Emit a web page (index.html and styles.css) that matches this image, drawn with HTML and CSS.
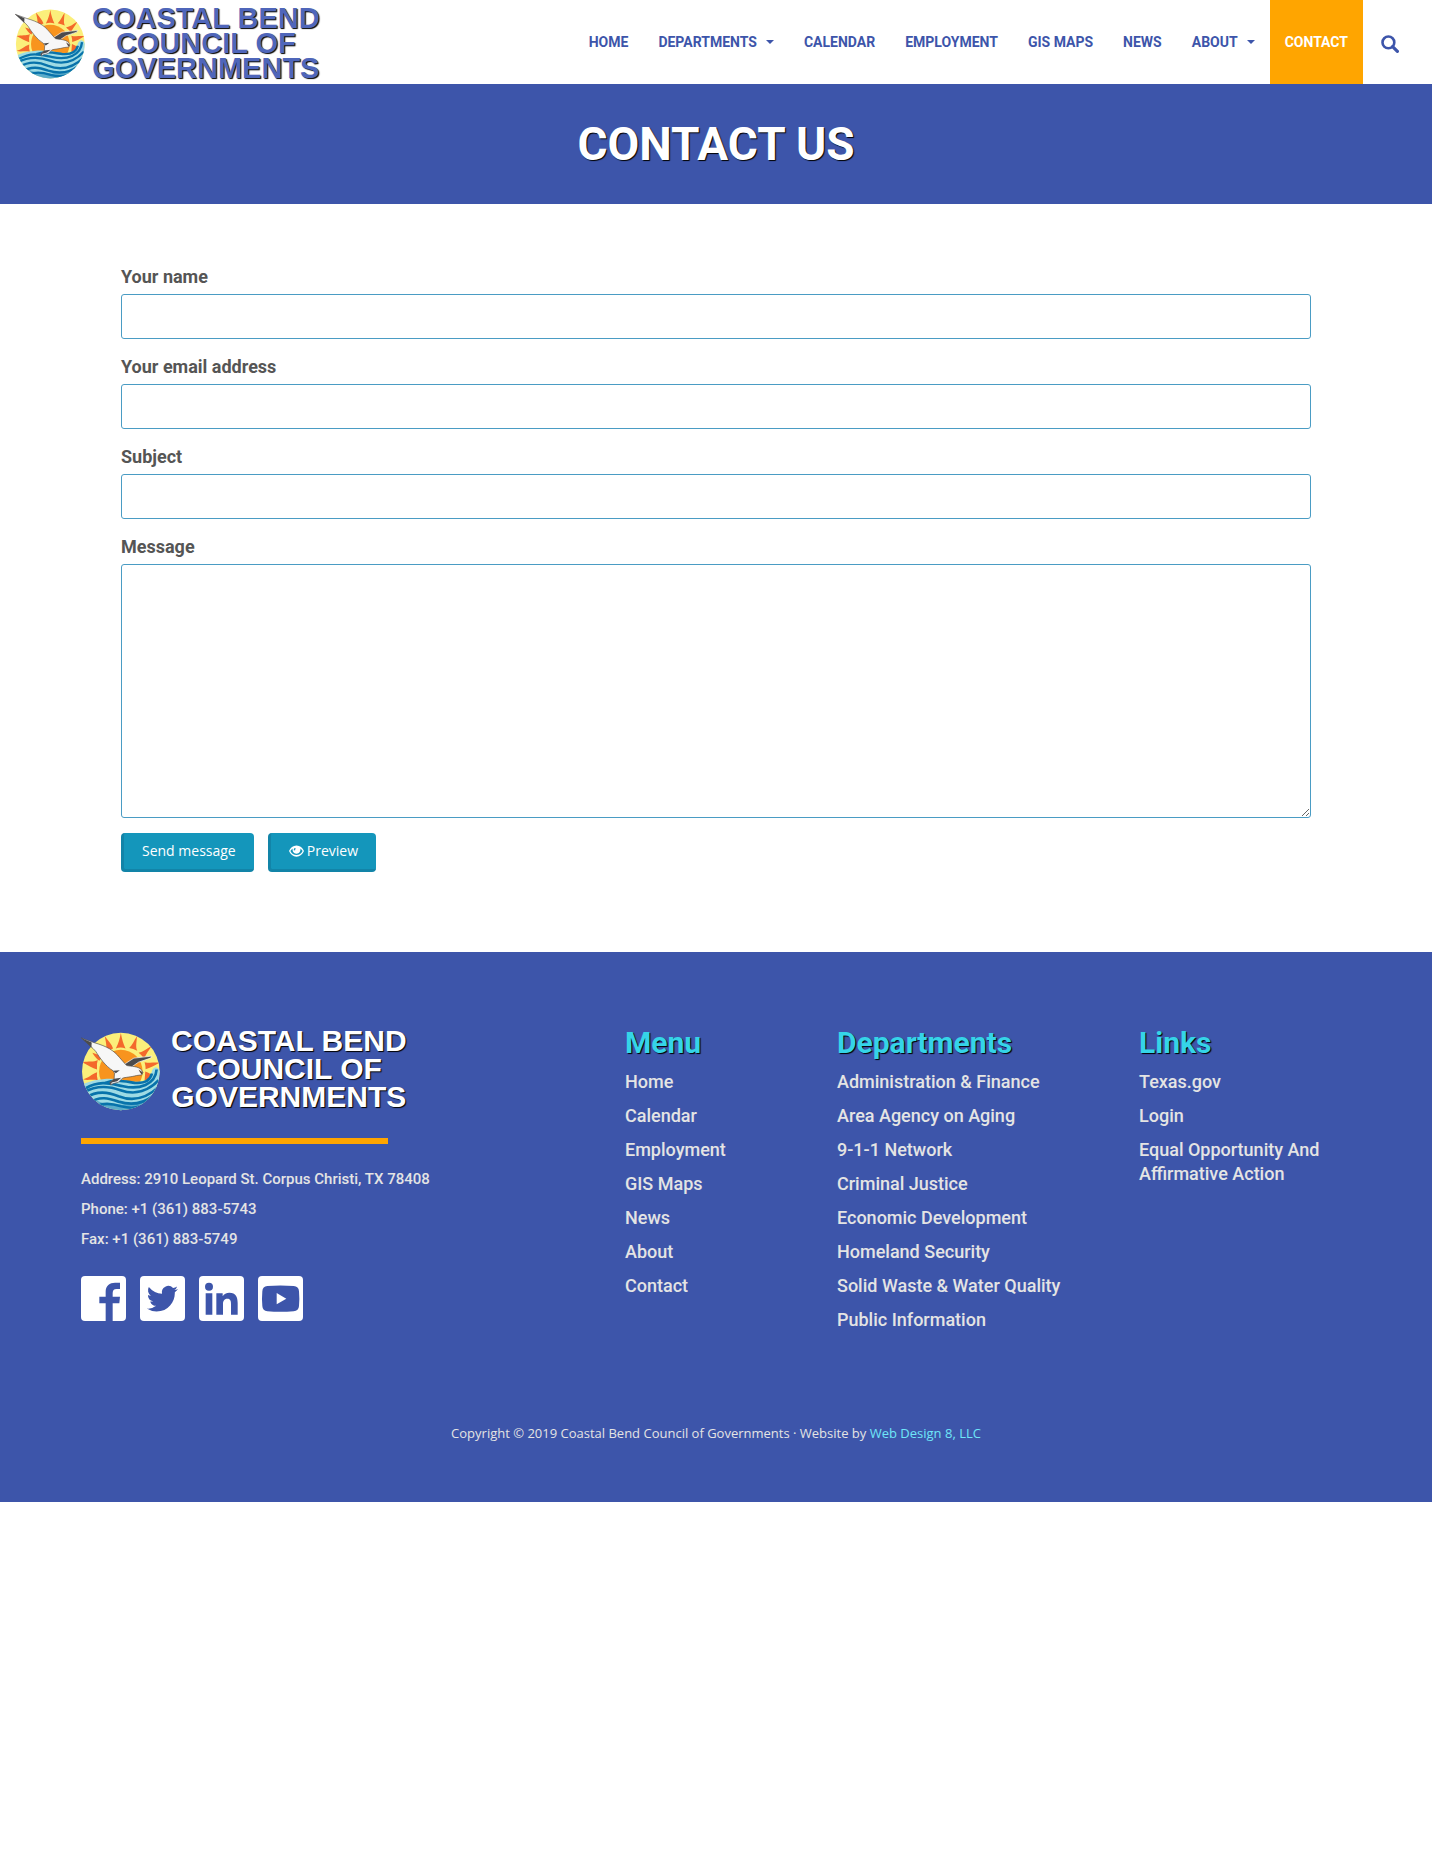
FILE: index.html
```html
<!DOCTYPE html>
<html lang="en">
<head>
<meta charset="utf-8">
<meta name="viewport" content="width=device-width, initial-scale=1">
<title>Contact Us | Coastal Bend Council of Governments</title>
<link rel="stylesheet" href="styles.css">
</head>
<body>
<svg class="defs" aria-hidden="true">
  <symbol id="emblem" viewBox="0 0 236 236">
    <clipPath id="disc"><circle cx="119" cy="118" r="116"/></clipPath>
    <g clip-path="url(#disc)">
      <rect width="236" height="236" fill="#fbef7b"/>
      <g fill="#f4692b">
        <path d="M104 49C112 34 116 20 119 3C122 20 126 34 133 49Q118 44 104 49Z"/>
        <path d="M74 59C79 43 73 27 71 12C80 25 92 36 96 49Q84 52 74 59Z"/>
        <path d="M144 48C154 40 158 26 167 13C167 28 162 44 168 56Q156 50 144 48Z"/>
        <path d="M172 62C186 60 197 50 211 42C203 56 193 66 189 80Q182 69 172 62Z"/>
        <path d="M190 90C204 94 218 90 234 92C221 100 206 108 193 111Q193 100 190 90Z"/>
        <path d="M50 84C38 92 22 86 5 91C20 98 34 108 48 112Q46 96 50 84Z"/>
        <path d="M48 120C32 126 20 138 6 141C18 146 32 140 50 144Q46 132 48 120Z"/>
        <path d="M45 66C55 68 60 76 60 78L55 86C46 80 40 72 34 62Z"/>
        <path d="M192 118C204 122 216 132 230 136L190 144Z"/>
      </g>
      <circle cx="119" cy="118" r="65" fill="#f8941e"/>
      <path d="M0 159C30 144 74 136 119 142C154 149 190 154 204 140C214 128 206 112 222 105C232 106 238 116 238 130V240H0Z" fill="#9edbe4"/>
      <g fill="none" stroke="#0873ab" stroke-width="8">
        <path d="M14 168C60 142 92 156 126 162C174 173 222 158 226 112"/>
        <path d="M8 180C50 158 84 162 118 174C164 190 204 174 232 144"/>
        <path d="M14 196C48 174 80 178 112 192C154 208 196 198 232 164"/>
        <path d="M26 212C54 190 84 198 112 208C150 220 186 214 216 190"/>
        <path d="M46 224C66 208 94 214 120 222C150 230 178 226 200 212"/>
        <path d="M72 152C102 140 132 148 160 152C186 154 206 148 212 124"/>
      </g>
      <path d="M20 186C60 230 150 222 218 196L190 236H50Z" fill="#0873ab" opacity=".45"/>
    </g>
    <path d="M130 96L158 78L212 72L208 78L172 90L146 108Z" fill="#4b4b4d" stroke="#fff" stroke-width="2"/>
    <path d="M1 18L40 32C78 43 98 55 115 76L136 100C150 103 170 102 180 112L185 121L182 128L166 130C148 135 132 135 124 138L112 150L96 154L89 158L86 151L99 140L100 123L96 116C72 101 56 77 44 58Q30 42 1 18Z" fill="#f7f7f7" stroke="#504c49" stroke-width="2"/>
    <path d="M1 18L32 31L31 47Q18 34 1 18ZM96 116L116 114L104 123ZM99 140L120 137L108 147L92 151L89 158L86 151Z" fill="#4b4b4d"/>
    <path d="M172 112L185 121L181 127L176 120Z" fill="#5a4a3c"/>
  </symbol>
</svg>

<header class="site-header">
  <a class="brand" href="#">
    <svg class="brand-emblem" aria-hidden="true"><use href="#emblem"/></svg>
    <span class="brand-name">COASTAL BEND<br>COUNCIL OF<br>GOVERNMENTS</span>
  </a>
  <nav class="main-nav" aria-label="Main">
    <a href="#">HOME</a>
    <a href="#">DEPARTMENTS<span class="caret"></span></a>
    <a href="#">CALENDAR</a>
    <a href="#">EMPLOYMENT</a>
    <a href="#">GIS MAPS</a>
    <a href="#">NEWS</a>
    <a href="#">ABOUT<span class="caret"></span></a>
    <a class="active" href="#">CONTACT</a>
    <button class="search-toggle" type="button" aria-label="Search">
      <svg class="search-icon" viewBox="0 0 18 18" aria-hidden="true"><circle cx="7.4" cy="7.4" r="5.9" fill="none" stroke="currentColor" stroke-width="2.6"/><path d="M11.6 11.6L16.4 16.4" stroke="currentColor" stroke-width="3.2" stroke-linecap="round"/></svg>
    </button>
  </nav>
</header>

<section class="banner"><h1>CONTACT US</h1></section>

<main class="content">
  <form class="contact-form">
    <div class="field"><label for="name">Your name</label><input id="name" type="text"></div>
    <div class="field"><label for="email">Your email address</label><input id="email" type="email"></div>
    <div class="field"><label for="subject">Subject</label><input id="subject" type="text"></div>
    <div class="field"><label for="message">Message</label><textarea id="message"></textarea></div>
    <div class="actions">
      <button class="btn" type="submit">Send message</button>
      <button class="btn" type="button"><svg class="eye" viewBox="0 0 16 12" aria-hidden="true"><path fill="currentColor" fill-rule="evenodd" d="M8 0C4.300 0 1.500 2.400 0 6C1.500 9.600 4.300 12 8 12S14.500 9.600 16 6C14.500 2.400 11.700 0 8 0ZM3.900 3.200C3.300 5.800 5 8.800 8 8.800S12.700 5.800 12.100 3.200C13.200 3.900 14 4.900 14.500 6C13.200 8.700 11 10.300 8 10.300S2.800 8.700 1.500 6C2 4.900 2.800 3.900 3.900 3.200ZM6 2.900C5.200 3.600 4.900 4.500 5.100 5.500L6.600 5.100C6.500 4.300 6.700 3.700 7.300 3.200Z"/></svg>Preview</button>
    </div>
  </form>
</main>

<footer class="site-footer">
  <div class="footer-grid">
    <div class="about">
      <a class="footer-brand" href="#">
        <svg class="footer-emblem" aria-hidden="true"><use href="#emblem"/></svg>
        <span class="footer-name">COASTAL BEND<br>COUNCIL OF<br>GOVERNMENTS</span>
      </a>
      <hr class="rule">
      <address class="details">
        <p>Address: 2910 Leopard St. Corpus Christi, TX 78408</p>
        <p>Phone: +1 (361) 883-5743</p>
        <p>Fax: +1 (361) 883-5749</p>
      </address>
      <div class="social">
        <a href="#" aria-label="Facebook"><svg viewBox="0 0 135 135"><rect width="135" height="135" rx="12" fill="#fff"/><path fill="#3d55aa" d="M74 135V82H55V62H74V46C74 29 86 20 102 20H117V39H107C98 39 95 44 95 51V62H117L115 82H95V135Z"/></svg></a>
        <a href="#" aria-label="Twitter"><svg viewBox="0 0 135 135"><rect width="135" height="135" rx="12" fill="#fff"/><path fill="#3d55aa" transform="translate(20 21) scale(3.920)" d="M24 4.560a9.800 9.800 0 0 1-2.830.770 4.930 4.930 0 0 0 2.170-2.720 9.860 9.860 0 0 1-3.130 1.190A4.920 4.920 0 0 0 11.800 8.290 13.980 13.980 0 0 1 1.670 3.150a4.920 4.920 0 0 0 1.520 6.570 4.900 4.900 0 0 1-2.230-.610v.060a4.930 4.930 0 0 0 3.950 4.830 4.900 4.900 0 0 1-2.220.080 4.930 4.930 0 0 0 4.600 3.420A9.870 9.870 0 0 1 0 19.540a13.940 13.940 0 0 0 7.550 2.210c9.050 0 14-7.500 14-14v-.640A10 10 0 0 0 24 4.560Z"/></svg></a>
        <a href="#" aria-label="LinkedIn"><svg viewBox="0 0 135 135"><rect width="135" height="135" rx="12" fill="#fff"/><g fill="#3d55aa"><circle cx="30" cy="32" r="12"/><path d="M20 52H40V116H20ZM52 52H71V61C75 54 82 50 91 50C111 50 116 63 116 81V116H96V85C96 76 95 68 85 68S72 76 72 84V116H52Z"/></g></svg></a>
        <a href="#" aria-label="YouTube"><svg viewBox="0 0 135 135"><rect width="135" height="135" rx="12" fill="#fff"/><path fill="#3d55aa" d="M28 30Q67 27 107 30Q122 31 123 46Q125 68 123 90Q122 105 107 106Q67 109 28 106Q14 105 13 90Q11 68 13 46Q14 31 28 30Z"/><path d="M56 51L85 68L56 85Z" fill="#fff"/></svg></a>
      </div>
    </div>
    <nav class="links" aria-labelledby="menu-title">
      <h2 id="menu-title">Menu</h2>
      <ul>
        <li><a href="#">Home</a></li><li><a href="#">Calendar</a></li><li><a href="#">Employment</a></li><li><a href="#">GIS Maps</a></li><li><a href="#">News</a></li><li><a href="#">About</a></li><li><a href="#">Contact</a></li>
      </ul>
    </nav>
    <nav class="links" aria-labelledby="dept-title">
      <h2 id="dept-title">Departments</h2>
      <ul>
        <li><a href="#">Administration &amp; Finance</a></li><li><a href="#">Area Agency on Aging</a></li><li><a href="#">9-1-1 Network</a></li><li><a href="#">Criminal Justice</a></li><li><a href="#">Economic Development</a></li><li><a href="#">Homeland Security</a></li><li><a href="#">Solid Waste &amp; Water Quality</a></li><li><a href="#">Public Information</a></li>
      </ul>
    </nav>
    <nav class="links" aria-labelledby="links-title">
      <h2 id="links-title">Links</h2>
      <ul>
        <li><a href="#">Texas.gov</a></li><li><a href="#">Login</a></li><li><a href="#">Equal Opportunity And Affirmative Action</a></li>
      </ul>
    </nav>
  </div>
  <p class="copyright">Copyright © 2019 Coastal Bend Council of Governments · Website by <a href="#">Web Design 8, LLC</a></p>
</footer>
</body>
</html>
```
FILE: styles.css
```css
* { box-sizing: border-box; }

body {
  margin: 0;
  background: #fff;
  color: #555;
  font-family: Roboto, "Liberation Sans", sans-serif;
}

a { color: inherit; text-decoration: none; }
h1, h2, p, ul { margin: 0; padding: 0; }
ul { list-style: none; }
svg { display: block; }
.defs { position: absolute; width: 0; height: 0; }

/* Header */
.site-header {
  display: flex;
  justify-content: space-between;
  height: 84px;
  padding: 0 18px 0 15px;
}

.brand { display: flex; align-items: center; gap: 7px; }
.brand-emblem { width: 70px; height: 70px; margin-top: 4px; }

.brand-name {
  color: #4f66ba;
  font: bold 29px/25px "Liberation Sans", Arial, sans-serif;
  text-align: center;
  text-shadow: 1px 1px 1px #000;
  padding-top: 2px;
}

.main-nav { display: flex; }

.main-nav a {
  display: flex;
  align-items: center;
  padding: 0 15px;
  color: #3d55aa;
  font-size: 14px;
  font-weight: 700;
  line-height: 20px;
}

.main-nav .active { background: #ffa500; color: #fff; }

.caret {
  margin-left: 9px;
  border: 4px solid transparent;
  border-top-color: currentColor;
  border-bottom: 0;
}

.search-toggle {
  padding: 4px 15px 0 18px;
  border: 0;
  background: none;
  color: #3d55aa;
}

.search-icon { width: 18px; height: 18px; }

/* Page title */
.banner {
  padding: 30px 0;
  background: #3d55aa;
  color: #fff;
  text-align: center;
}

.banner h1 {
  font-size: 46px;
  line-height: 60px;
  text-shadow: 1px 1px 1px #000;
}

/* Contact form */
.content { max-width: 1190px; margin: 0 auto; padding: 60px 0 80px; }
.field { margin-bottom: 15px; }

.field label {
  display: block;
  margin-bottom: 5px;
  font-size: 18px;
  font-weight: 700;
  line-height: 25px;
}

.field input,
.field textarea {
  display: block;
  width: 100%;
  height: 45px;
  padding: 6px 12px;
  border: 1px solid #4a9cc4;
  border-radius: 3px;
  background: #fff;
  font: 16px/24px "Open Sans", sans-serif;
}

.field textarea { height: 254px; resize: vertical; }
.actions { display: flex; gap: 14px; }

.btn {
  display: flex;
  align-items: center;
  gap: 3px;
  height: 39px;
  padding: 0 18px;
  border: 0 solid #1284a8;
  border-width: 0 0 3px 3px;
  border-radius: 4px;
  background: #1496bb;
  color: #fff;
  font: 14px/20px "Open Sans", sans-serif;
}

.eye { width: 15px; height: 12px; }

/* Footer */
.site-footer {
  padding: 74px 81px 59px;
  background: #3d55aa;
  color: #e4e4e4;
}

.footer-grid { display: grid; grid-template-columns: 544fr 212fr 302fr 212fr; }
.footer-brand { display: flex; align-items: flex-end; gap: 11px; padding-top: 1px; }
.footer-emblem { width: 79px; height: 79px; }

.footer-name {
  color: #fff;
  font: bold 30px/28px "Liberation Sans", Arial, sans-serif;
  text-align: center;
  text-shadow: 1px 1px 1px #000;
}

.rule {
  width: 307px;
  height: 6px;
  margin: 27px 0 20px;
  border: 0;
  background: #ffa500;
}

.details { font-size: 15px; font-style: normal; font-weight: 500; line-height: 30px; }
.social { display: flex; gap: 14px; margin-top: 22px; }
.social svg { width: 45px; height: 45px; }

.links h2 {
  margin-bottom: 10px;
  color: #35d4e8;
  font-size: 30px;
  line-height: 34px;
  text-shadow: 1px 1px 1px #000;
}

.links li {
  margin-bottom: 10px;
  font-size: 18px;
  font-weight: 500;
  line-height: 24px;
}

.copyright {
  margin-top: 81px;
  font: 13px/20px "Open Sans", sans-serif;
  text-align: center;
}

.copyright a { color: #6fe6f8; }
```
